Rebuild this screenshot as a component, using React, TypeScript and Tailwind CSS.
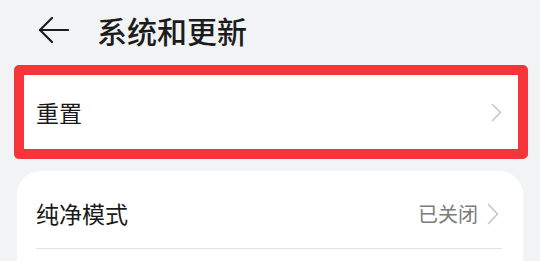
export default function App() {
  return (
    <div
      className="w-[540px] h-[261px] overflow-hidden bg-[#f1f3f5] flex flex-col"
      style={{ fontFamily: '"Noto Sans CJK SC", "Noto Sans", sans-serif' }}
    >
      {/* header */}
      <div className="h-[60px] flex items-center pl-[38px] shrink-0">
        <svg width="31" height="28" viewBox="0 0 31 28" fill="none" stroke="#1c1c1c" strokeWidth="2.2" strokeLinecap="round" strokeLinejoin="round">
          <path d="M30 14H2" />
          <path d="M14 2L2 14L14 26" />
        </svg>
        <span className="ml-[28px] text-[30px] leading-none font-medium text-[#1c1c1c]">系统和更新</span>
      </div>

      {/* highlighted row */}
      <div className="mt-[5px] ml-[14px] w-[514px] h-[94px] shrink-0 rounded-[5px] border-[10px] border-[#f5353a] bg-white flex items-center pl-[12px] pr-[16px]">
        <span className="text-[23px] leading-none text-[#1a1a1a]">重置</span>
        <svg className="ml-auto" width="11" height="19" viewBox="0 0 11 19" fill="none" stroke="#c6c6c6" strokeWidth="1.6" strokeLinecap="round" strokeLinejoin="round">
          <path d="M1.5 1.5L9.5 9.5L1.5 17.5" />
        </svg>
      </div>

      {/* card */}
      <div className="mt-[12px] ml-[17px] w-[506px] flex-1 rounded-t-[24px] bg-white pt-[8px]">
        <div className="h-[69px] flex items-center pl-[19px] pr-[24px]">
          <span className="text-[23px] leading-none text-[#1a1a1a]">纯净模式</span>
          <span className="ml-auto text-[20px] leading-none text-[#7b7b7b]">已关闭</span>
          <svg className="ml-[9px]" width="12" height="22" viewBox="0 0 12 22" fill="none" stroke="#c6c6c6" strokeWidth="1.6" strokeLinecap="round" strokeLinejoin="round">
            <path d="M1.5 1.5L10.5 11L1.5 20.5" />
          </svg>
        </div>
        <div className="ml-[19px] mr-[21px] h-px bg-[#e4e4e4]" />
      </div>
    </div>
  );
}
